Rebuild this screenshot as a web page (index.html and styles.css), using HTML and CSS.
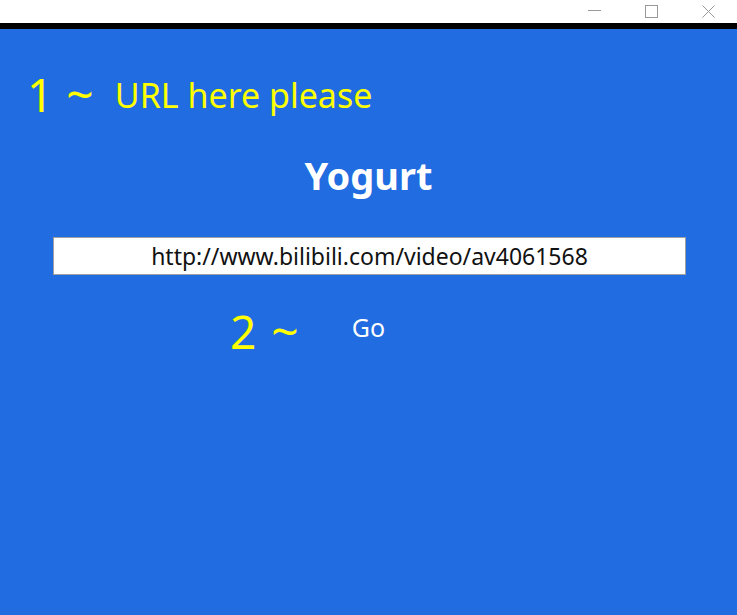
FILE: index.html
```html
<!DOCTYPE html>
<html>
<head>
<meta charset="utf-8">
<link rel="stylesheet" href="styles.css">
</head>
<body>
<div class="titlebar">
  <div class="controls">
    <span class="ctl"><svg width="13" height="13" viewBox="0 0 13 13"><line x1="0" y1="5.5" x2="13" y2="5.5" stroke="#999" stroke-width="1"/></svg></span>
    <span class="ctl"><svg width="13" height="13" viewBox="0 0 13 13"><rect x="0.5" y="0.5" width="12" height="12" fill="none" stroke="#999" stroke-width="1"/></svg></span>
    <span class="ctl"><svg width="13" height="13" viewBox="0 0 13 13"><path d="M0.5 0.5 L12.5 12.5 M12.5 0.5 L0.5 12.5" stroke="#999" stroke-width="1"/></svg></span>
  </div>
</div>
<div class="edge"></div>
<main class="app">
  <div class="step step-one"><span class="num">1</span><span class="tilde">~</span><span class="hint">URL here please</span></div>
  <h1 class="title">Yogurt</h1>
  <div class="url-box">http://www.bilibili.com/video/av4061568</div>
  <div class="go-row">
    <div class="step step-two"><span class="num">2</span><span class="tilde">~</span></div>
    <button class="go">Go</button>
    <div></div>
  </div>
</main>
</body>
</html>
```
FILE: styles.css
```css
html, body {
  margin: 0;
  padding: 0;
  height: 100%;
}
body {
  display: flex;
  flex-direction: column;
  font-family: "Noto Sans", "Open Sans", sans-serif;
  background: #206ce0;
}
.titlebar {
  height: 23px;
  flex: none;
  background: #fff;
  display: flex;
  justify-content: flex-end;
}
.controls {
  display: flex;
}
.ctl {
  width: 57px;
  height: 23px;
  display: flex;
  align-items: center;
  justify-content: center;
}
.ctl svg { display: block; }
.edge {
  height: 6px;
  flex: none;
  background: #000;
}
.app {
  flex: 1;
  background: #206ce0;
  display: flex;
  flex-direction: column;
  padding-top: 42px;
}
.step {
  color: #ffff00;
  font-size: 46px;
  line-height: 46px;
  white-space: nowrap;
}
.step-one {
  padding-left: 27px;
}
.num {
  font-size: 46px;
}
.tilde {
  font-size: 48px;
  margin-left: 13px;
}
.hint {
  font-size: 34px;
  margin-left: 21px;
  vertical-align: 4px;
}
.title {
  margin: 32px 0 0;
  text-align: center;
  color: #fff;
  font-size: 38px;
  font-weight: bold;
  line-height: 50px;
}
.url-box {
  margin: 37px 51px 0 53px;
  height: 36px;
  border: 1px solid #a0a0a0;
  background: #fff;
  color: #111;
  font-size: 23px;
  line-height: 36px;
  text-align: center;
  white-space: nowrap;
}
.go-row {
  display: grid;
  grid-template-columns: 1fr auto 1fr;
  align-items: start;
  margin-top: 33px;
}
.step-two {
  justify-self: end;
  padding-right: 53px;
}
.step-two .tilde {
  margin-left: 15px;
}
.go {
  margin-top: 2px;
  background: none;
  border: none;
  padding: 0;
  color: #fff;
  font-family: inherit;
  font-size: 25px;
  line-height: 34px;
}
```
